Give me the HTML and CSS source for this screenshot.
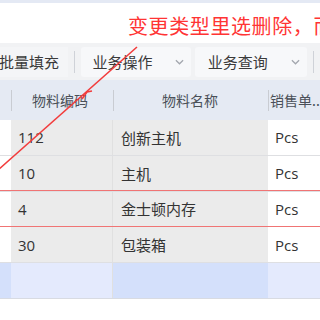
FILE: index.html
```html
<!DOCTYPE html>
<html lang="zh">
<head>
<meta charset="utf-8">
<link rel="stylesheet" href="styles.css">
</head>
<body>
<div class="page">
  <div class="topstrip"></div>
  <div class="banner"><span class="note">变更类型里选删除，而</span></div>
  <div class="toolbar">
    <div class="tool plain">批量填充</div>
    <div class="sep"></div>
    <div class="tool btn"><span>业务操作</span><svg class="chev" viewBox="0 0 10 6"><polyline points="1,1 5,5 9,1"/></svg></div>
    <div class="tool btn btn2"><span>业务查询</span><svg class="chev" viewBox="0 0 10 6"><polyline points="1,1 5,5 9,1"/></svg></div>
    <div class="sep"></div>
  </div>
  <div class="grid">
    <div class="row head">
      <div class="c c0"></div>
      <div class="c c1"><span class="hsep"></span><span class="htxt">物料编码</span></div>
      <div class="c c2"><span class="hsep"></span><span class="htxt">物料名称</span></div>
      <div class="c c3"><span class="hsep"></span><span class="htxt">销售单...</span></div>
    </div>
    <div class="row">
      <div class="c c0"></div><div class="c c1">112</div><div class="c c2">创新主机</div><div class="c c3">Pcs</div>
    </div>
    <div class="row">
      <div class="c c0"></div><div class="c c1">10</div><div class="c c2">主机</div><div class="c c3">Pcs</div>
    </div>
    <div class="row">
      <div class="c c0"></div><div class="c c1">4</div><div class="c c2">金士顿内存</div><div class="c c3">Pcs</div>
    </div>
    <div class="row">
      <div class="c c0"></div><div class="c c1">30</div><div class="c c2">包装箱</div><div class="c c3">Pcs</div>
    </div>
    <div class="row sel">
      <div class="c c0"></div><div class="c c1"></div><div class="c c2"></div><div class="c c3"></div>
    </div>
  </div>
  <div class="redbox"></div>
  <svg class="arrow" viewBox="0 0 320 320" width="320" height="320">
    <line x1="137" y1="47" x2="-2" y2="170"/>
    <polyline points="82,99 87,92 92,91"/>
  </svg>
</div>
</body>
</html>
```
FILE: styles.css
```css
html, body {
  margin: 0;
  padding: 0;
  background: #ffffff;
}
.page {
  position: relative;
  width: 320px;
  height: 320px;
  overflow: hidden;
  font-family: "Open Sans", "Noto Sans CJK SC", sans-serif;
  color: #333333;
}
.topstrip {
  height: 3px;
  background: #e4e9f4;
}
.banner {
  height: 40px;
  box-sizing: border-box;
  display: flex;
  align-items: center;
  padding-left: 128px;
  padding-top: 6px;
  white-space: nowrap;
  overflow: hidden;
}
.note {
  font-family: "Noto Sans CJK SC", sans-serif;
  font-size: 20px;
  color: #ff3434;
  letter-spacing: 0.6px;
  line-height: 1;
}
.toolbar {
  height: 37px;
  background: #f1f2f4;
  display: flex;
  align-items: center;
  white-space: nowrap;
}
.tool {
  font-family: "Noto Sans CJK SC", sans-serif;
  font-size: 15px;
  color: #3a3a3a;
  height: 30px;
  display: flex;
  align-items: center;
}
.plain {
  margin-left: -1px;
  width: 70px;
  background: #f4f5f7;
}
.sep {
  width: 1px;
  height: 22px;
  background: #cfd2d8;
  margin: 0 6px;
}
.btn {
  width: 110px;
  box-sizing: border-box;
  padding-left: 11px;
  padding-right: 7px;
  background: #f7f8fa;
  border-radius: 3px;
  justify-content: space-between;
}
.btn2 {
  width: 113px;
  margin-left: 4px;
  padding-left: 13px;
  padding-right: 7px;
}
.chev {
  width: 9px;
  height: 6px;
  fill: none;
  stroke: #a3a7ae;
  stroke-width: 1.4;
}
.grid {
  display: flex;
  flex-direction: column;
}
.row {
  display: flex;
  height: 35.75px;
  box-sizing: border-box;
  border-bottom: 1px solid #dedfe2;
}
.row.head {
  height: 40px;
  background: #e5eaf3;
  border-bottom: none;
}
.c {
  display: flex;
  align-items: center;
  box-sizing: border-box;
  font-size: 15px;
  white-space: nowrap;
  overflow: hidden;
}
.c0 { width: 11px; background: #ffffff; }
.c1 { width: 102px; background: #ebebeb; padding-left: 7px; border-right: 1px solid #e0e0e0; }
.c2 { width: 155px; background: #ebebeb; padding-left: 8px; font-family: "Noto Sans CJK SC", sans-serif; }
.c3 { width: 52px; background: #ffffff; padding-left: 7px; }
.head .c { background: transparent; border-right: none; padding-left: 0; }
.hsep {
  width: 1px;
  height: 21px;
  background: #c9ccd2;
  flex: none;
}
.htxt {
  font-family: "Noto Sans CJK SC", sans-serif;
  font-size: 14px;
  color: #4a5058;
}
.head .c1 .htxt { margin-left: 20px; }
.head .c2 .htxt { margin-left: 48px; }
.head .c3 .htxt { margin-left: 1px; }
.sel .c0 { background: #d4e0fb; }
.sel .c1 { background: #e4eafd; }
.sel .c2 { background: #d4e0fb; }
.sel .c3 { background: #e4eafd; }
.sel { border-bottom: 1px solid #d8dbe2; }
.redbox {
  position: absolute;
  left: -3px;
  right: -3px;
  top: 190px;
  height: 37px;
  box-sizing: border-box;
  border: 1.5px solid #f07474;
}
.arrow {
  position: absolute;
  top: 0;
  left: 0;
  fill: none;
  stroke: #f23c3c;
  stroke-width: 1.6;
  pointer-events: none;
}
```
